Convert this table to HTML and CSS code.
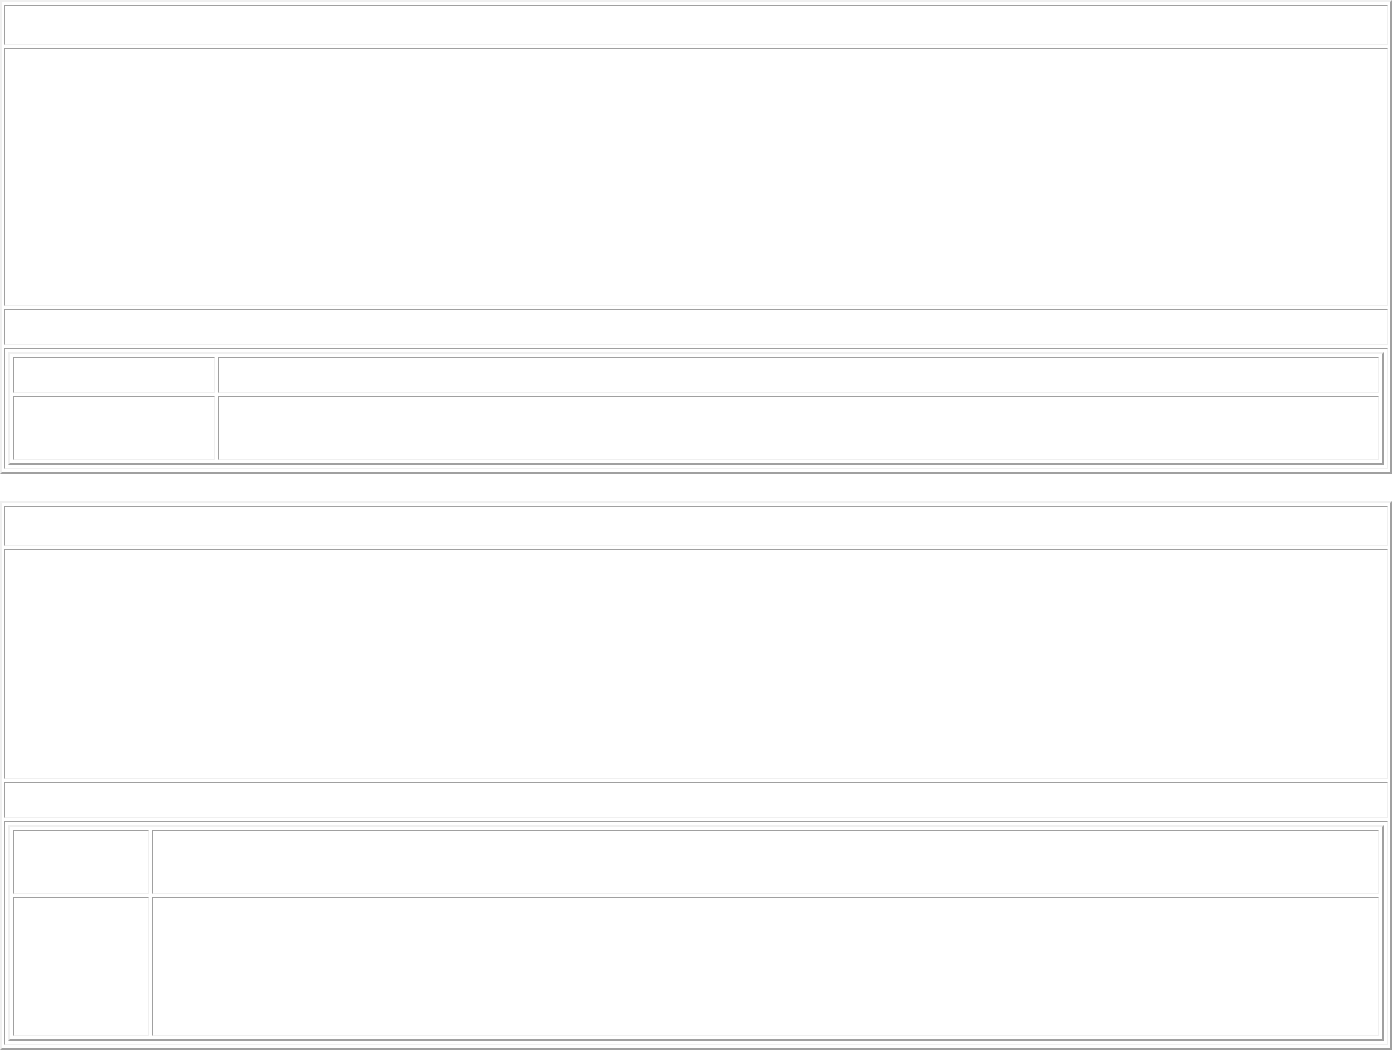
FILE: index.html
```html
<!DOCTYPE html>
<html>
<head>
<meta charset="utf-8">
<title>Tables</title>
<link rel="stylesheet" href="styles.css">
</head>
<body>
<table class="frame frame-a">
  <tr><td class="cell"><div class="h-head"></div></td></tr>
  <tr><td class="cell"><div class="h-body-a"></div></td></tr>
  <tr><td class="cell"><div class="h-bar"></div></td></tr>
  <tr><td class="cell holder">
    <table class="grid">
      <tr><td class="cell key key-a"><div class="h-r1a"></div></td><td class="cell"></td></tr>
      <tr><td class="cell key key-a"><div class="h-r2a"></div></td><td class="cell"></td></tr>
    </table>
  </td></tr>
</table>
<table class="frame frame-b">
  <tr><td class="cell"><div class="h-head"></div></td></tr>
  <tr><td class="cell"><div class="h-body-b"></div></td></tr>
  <tr><td class="cell"><div class="h-bar"></div></td></tr>
  <tr><td class="cell holder">
    <table class="grid">
      <tr><td class="cell key key-b"><div class="h-r1b"></div></td><td class="cell"></td></tr>
      <tr><td class="cell key key-b"><div class="h-r2b"></div></td><td class="cell"></td></tr>
    </table>
  </td></tr>
</table>
</body>
</html>
```
FILE: styles.css
```css
html, body {
  margin: 0;
  padding: 0;
  background: #ffffff;
  font-family: "Liberation Serif", serif;
}
.frame {
  width: 1392px;
  border-collapse: separate;
  border-spacing: 2px 3px;
  border-style: solid;
  border-width: 2px;
  border-color: #f0f0f0 #a0a0a0 #a0a0a0 #f0f0f0;
}
.frame-a { margin: 0 0 27px 0; }
.frame-b { margin: 0; }
.cell {
  padding: 0;
  border-style: solid;
  border-width: 1px;
  border-color: #a0a0a0 #f0f0f0 #f0f0f0 #a0a0a0;
}
.holder { padding: 3px; }
.grid {
  width: 100%;
  border-collapse: separate;
  border-spacing: 3px;
  border-style: solid;
  border-width: 2px;
  border-color: #f0f0f0 #a0a0a0 #a0a0a0 #f0f0f0;
}
.key-a { width: 200px; }
.key-b { width: 134px; }
.h-head { height: 38px; }
.h-body-a { height: 256px; }
.h-body-b { height: 228px; }
.h-bar { height: 34px; }
.h-r1a { height: 34px; }
.h-r2a { height: 62px; }
.h-r1b { height: 62px; }
.h-r2b { height: 137px; }
```
